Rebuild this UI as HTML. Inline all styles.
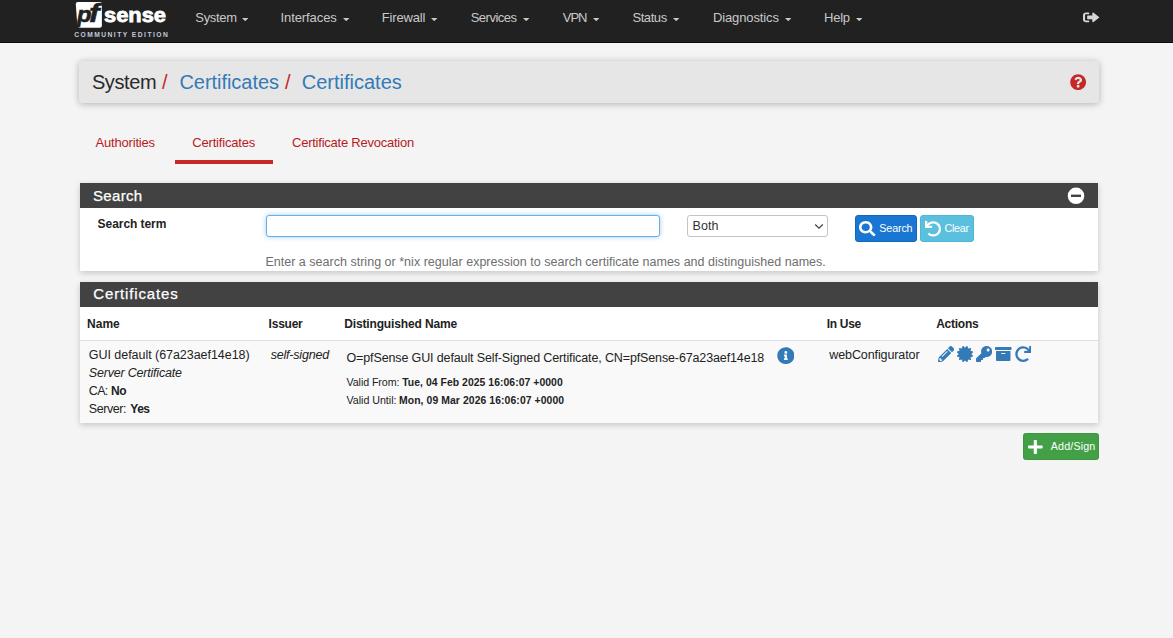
<!DOCTYPE html>
<html><head><meta charset="utf-8"><title>pfSense - Certificates</title>
<style>
*{box-sizing:border-box;margin:0;padding:0}
html,body{width:1173px;height:638px;overflow:hidden}
body{background:#f4f4f4;font-family:"Liberation Sans",sans-serif;color:#222;position:relative}
.a{position:absolute;display:block}
.t{position:absolute;white-space:nowrap;font-family:"Liberation Sans",sans-serif}
.panel{background:#fff;box-shadow:0 2px 6px rgba(0,0,0,.19)}
</style></head><body>
<div class="a" style="left:0;top:0;width:1173px;height:42.6px;background:#212121;border-bottom:1px solid #0c0c0c"></div>

<svg class="a" style="left:70px;top:0" width="105" height="42" viewBox="0 0 105 42">
<path d="M7.8 2 H30 Q31.9 2 31.9 3.9 V25.3 Q31.9 27.8 29.4 27.8 H10 Q7.6 27.8 7.3 25.4 L5.8 4.2 Q5.7 2 7.8 2 Z" fill="#fff"/>
<text x="7" y="22.4" font-family="Liberation Sans" font-weight="bold" font-style="italic" font-size="21.5" fill="#212121" stroke="#212121" stroke-width=".6" textLength="14.5" lengthAdjust="spacingAndGlyphs">p</text>
<text x="19" y="22.4" font-family="Liberation Sans" font-weight="bold" font-style="italic" font-size="25.5" fill="#212121" stroke="#212121" stroke-width=".5" textLength="10.5" lengthAdjust="spacingAndGlyphs">f</text>
<text x="34" y="22.4" font-family="Liberation Sans" font-weight="bold" font-size="20.3" fill="#fff" stroke="#fff" stroke-width=".8" textLength="62" lengthAdjust="spacingAndGlyphs">sense</text>
<text x="4.2" y="36.9" font-family="Liberation Sans" font-weight="bold" font-size="6.7" fill="#c3cbdc" textLength="93.6" lengthAdjust="spacing">COMMUNITY EDITION</text>
</svg>

<svg class="a" style="left:242px;top:18.1px" width="6.4" height="3.2" viewBox="0 0 6.4 3.2"><path d="M0 0H6.4L3.2 3.2Z" fill="#c9c9c9"/></svg>
<svg class="a" style="left:343px;top:18.1px" width="6.4" height="3.2" viewBox="0 0 6.4 3.2"><path d="M0 0H6.4L3.2 3.2Z" fill="#c9c9c9"/></svg>
<svg class="a" style="left:431px;top:18.1px" width="6.4" height="3.2" viewBox="0 0 6.4 3.2"><path d="M0 0H6.4L3.2 3.2Z" fill="#c9c9c9"/></svg>
<svg class="a" style="left:522.7px;top:18.1px" width="6.4" height="3.2" viewBox="0 0 6.4 3.2"><path d="M0 0H6.4L3.2 3.2Z" fill="#c9c9c9"/></svg>
<svg class="a" style="left:592.7px;top:18.1px" width="6.4" height="3.2" viewBox="0 0 6.4 3.2"><path d="M0 0H6.4L3.2 3.2Z" fill="#c9c9c9"/></svg>
<svg class="a" style="left:673.2px;top:18.1px" width="6.4" height="3.2" viewBox="0 0 6.4 3.2"><path d="M0 0H6.4L3.2 3.2Z" fill="#c9c9c9"/></svg>
<svg class="a" style="left:784.7px;top:18.1px" width="6.4" height="3.2" viewBox="0 0 6.4 3.2"><path d="M0 0H6.4L3.2 3.2Z" fill="#c9c9c9"/></svg>
<svg class="a" style="left:855.5px;top:18.1px" width="6.4" height="3.2" viewBox="0 0 6.4 3.2"><path d="M0 0H6.4L3.2 3.2Z" fill="#c9c9c9"/></svg>
<svg class="a" style="left:1083px;top:11.4px" width="16.5" height="12.8" viewBox="0 0 512 512" preserveAspectRatio="none"><path d="M497 273L329 441c-15 15-41 4.500-41-17v-96H152c-13.300 0-24-10.700-24-24v-96c0-13.300 10.700-24 24-24h136V88c0-21.400 25.900-32 41-17l168 168c9.300 9.400 9.300 24.600 0 34zM192 436v-40c0-6.600-5.400-12-12-12H96c-17.700 0-32-14.300-32-32V160c0-17.700 14.300-32 32-32h84c6.600 0 12-5.400 12-12V76c0-6.600-5.400-12-12-12H96c-53 0-96 43-96 96v192c0 53 43 96 96 96h84c6.600 0 12-5.400 12-12z" fill="#d6d6d6"/></svg>
<div class="a" style="left:78.7px;top:61px;width:1020.8px;height:42.2px;background:#e6e6e6;border-radius:3px;box-shadow:0 1px 7px rgba(0,0,0,.28)"></div>
<svg class="a" style="left:1069.8px;top:73.7px" width="16.3" height="16.3" viewBox="0 0 512 512" preserveAspectRatio="none"><path d="M504 256c0 136.997-111.043 248-248 248S8 392.997 8 256C8 119.083 119.043 8 256 8s248 111.083 248 248zM262.655 90c-54.497 0-89.255 22.957-116.549 63.758-3.536 5.286-2.353 12.415 2.715 16.258l34.699 26.310c5.205 3.947 12.621 3.008 16.665-2.122 17.864-22.658 30.113-35.797 57.303-35.797 20.429 0 45.698 13.148 45.698 32.958 0 14.976-12.363 22.667-32.534 33.976C247.128 238.528 216 254.941 216 296v4c0 6.627 5.373 12 12 12h56c6.627 0 12-5.373 12-12v-1.333c0-28.462 83.186-29.647 83.186-106.667 0-58.002-60.165-102-116.531-102zM256 338c-25.365 0-46 20.635-46 46 0 25.364 20.635 46 46 46s46-20.636 46-46c0-25.365-20.635-46-46-46z" fill="#c62828"/></svg>
<div class="a" style="left:175px;top:160px;width:98px;height:4px;background:#c62828"></div>
<div class="a panel" style="left:80px;top:183px;width:1018px;height:88px"></div>
<div class="a" style="left:80px;top:183px;width:1018px;height:25px;background:#424242"></div>
<svg class="a" style="left:1067px;top:187px" width="18" height="18" viewBox="0 0 18 18"><circle cx="9" cy="8.8" r="8.3" fill="#fff"/><rect x="4" y="7.6" width="10" height="2.4" fill="#424242"/></svg>
<div class="a" style="left:265.5px;top:215px;width:394.5px;height:22px;border:1px solid #66afe9;border-radius:3px;background:#fff;box-shadow:0 0 5px rgba(102,175,233,.6)"></div>
<div class="a" style="left:687.3px;top:215.3px;width:140.3px;height:21.6px;border:1px solid #c4c4c4;border-radius:3px;background:#fff"></div>
<svg class="a" style="left:814px;top:223px" width="10" height="7" viewBox="0 0 10 7"><path d="M1.2 1.5 L5 5.1 L8.8 1.5" fill="none" stroke="#444" stroke-width="1.3"/></svg>
<div class="a" style="left:855px;top:215px;width:62px;height:27px;background:#1976d2;border:1px solid #1666b8;border-radius:3px"></div>
<svg class="a" style="left:859.3px;top:221.1px" width="16.5" height="15.3" viewBox="0 0 512 512" preserveAspectRatio="none"><path d="M505 442.700L405.300 343c-4.500-4.500-10.600-7-17-7H372c27.600-35.300 44-79.700 44-128C416 93.100 322.900 0 208 0S0 93.100 0 208s93.100 208 208 208c48.300 0 92.700-16.400 128-44v16.300c0 6.400 2.500 12.500 7 17l99.700 99.700c9.400 9.400 24.600 9.400 33.900 0l28.300-28.300c9.400-9.400 9.400-24.600.1-34zM208 336c-70.700 0-128-57.200-128-128 0-70.700 57.200-128 128-128 70.700 0 128 57.200 128 128 0 70.700-57.200 128-128 128z" fill="#fff"/></svg>
<div class="a" style="left:920px;top:215px;width:54px;height:27px;background:#5bc0de;border:1px solid #50b6d6;border-radius:3px"></div>
<svg class="a" style="left:924.5px;top:221.2px" width="16.3" height="15.8" viewBox="0 0 512 512" preserveAspectRatio="none"><path d="M212.333 224.333H12c-6.627 0-12-5.373-12-12V12C0 5.373 5.373 0 12 0h48c6.627 0 12 5.373 12 12v78.112C117.773 39.279 184.260 7.470 258.175 8.007c136.906.994 246.448 111.623 246.157 248.532C504.041 393.258 393.120 504 256.333 504c-64.089 0-122.496-24.313-166.510-64.215-5.099-4.622-5.334-12.554-.467-17.420l33.967-33.967c4.474-4.474 11.662-4.717 16.401-.525C170.760 415.336 211.580 432 256.333 432c97.268 0 176-78.716 176-176 0-97.267-78.716-176-176-176-58.496 0-110.280 28.476-142.274 72.333h98.274c6.627 0 12 5.373 12 12v48c0 6.627-5.373 12-12 12z" fill="#fff"/></svg>
<div class="a panel" style="left:80px;top:282px;width:1018px;height:141px"></div>
<div class="a" style="left:80px;top:282px;width:1018px;height:25px;background:#424242"></div>
<div class="a" style="left:80px;top:340px;width:1018px;height:83px;background:#f9f9f9;border-top:1.5px solid #ddd"></div>
<svg class="a" style="left:776.8px;top:346.8px" width="17.7" height="17.3" viewBox="0 0 512 512" preserveAspectRatio="none"><path d="M256 8C119.043 8 8 119.083 8 256c0 136.997 111.043 248 248 248s248-111.003 248-248C504 119.083 392.957 8 256 8zm0 110c23.196 0 42 18.804 42 42s-18.804 42-42 42-42-18.804-42-42 18.804-42 42-42zm56 254c0 6.627-5.373 12-12 12h-88c-6.627 0-12-5.373-12-12v-24c0-6.627 5.373-12 12-12h12v-64h-12c-6.627 0-12-5.373-12-12v-24c0-6.627 5.373-12 12-12h64c6.627 0 12 5.373 12 12v100h12c6.627 0 12 5.373 12 12v24z" fill="#337ab7"/></svg>
<svg class="a" style="left:937.8px;top:345.8px" width="16.2" height="16.2" viewBox="0 0 512 512" preserveAspectRatio="none"><path d="M497.900 142.100l-46.100 46.100c-4.700 4.700-12.300 4.700-17 0l-111-111c-4.700-4.700-4.700-12.300 0-17l46.100-46.100c18.700-18.700 49.100-18.700 67.900 0l60.100 60.100c18.800 18.700 18.800 49.100 0 67.900zM284.200 99.800L21.600 362.400.4 483.900c-2.900 16.400 11.400 30.600 27.800 27.800l121.500-21.300 262.600-262.600c4.700-4.700 4.700-12.300 0-17l-111-111c-4.800-4.700-12.400-4.700-17.100 0zM124.100 339.900c-5.500-5.500-5.500-14.300 0-19.800l154-154c5.500-5.500 14.300-5.500 19.800 0s5.500 14.300 0 19.800l-154 154c-5.500 5.500-14.300 5.500-19.800 0zM88 424h48v36.300l-64.500 11.300-31.100-31.100L51.700 376H88v48z" fill="#337ab7"/></svg>
<svg class="a" style="left:957px;top:345.8px" width="16" height="16.1" viewBox="0 0 512 512" preserveAspectRatio="none"><path d="M458.622 255.920l45.985-45.005c13.708-12.977 7.316-36.039-10.664-40.339l-62.650-15.990 17.661-62.015c4.991-17.838-11.829-34.663-29.661-29.671l-61.994 17.667-15.984-62.671C337.085.197 313.765-6.276 300.990 7.228L256 53.570 211.011 7.229c-12.630-13.351-36.047-7.234-40.325 10.668l-15.984 62.671-61.995-17.667C74.870 57.907 58.056 74.738 63.046 92.572l17.661 62.015-62.650 15.990C.069 174.878-6.310 197.944 7.392 210.915l45.985 45.005-45.985 45.004c-13.708 12.977-7.316 36.039 10.664 40.339l62.650 15.990-17.661 62.015c-4.991 17.838 11.829 34.663 29.661 29.671l61.994-17.667 15.984 62.671c4.439 18.575 27.696 24.018 40.325 10.668L256 458.610l44.989 46.001c12.500 13.488 35.987 7.486 40.325-10.668l15.984-62.671 61.994 17.667c17.836 4.994 34.651-11.837 29.661-29.671l-17.661-62.015 62.650-15.990c17.987-4.302 24.366-27.367 10.664-40.339l-45.984-45.004z" fill="#337ab7"/></svg>
<svg class="a" style="left:976.1px;top:345.8px" width="16.2" height="16" viewBox="0 0 512 512" preserveAspectRatio="none"><path d="M512 176.001C512 273.203 433.202 352 336 352c-11.220 0-22.190-1.062-32.827-3.069l-24.012 27.014A23.999 23.999 0 0 1 261.223 384H224v40c0 13.255-10.745 24-24 24h-40v40c0 13.255-10.745 24-24 24H24c-13.255 0-24-10.745-24-24v-78.059c0-6.365 2.529-12.470 7.029-16.971l161.802-161.802C163.108 213.814 160 195.271 160 176 160 78.798 238.797.001 335.999 0 433.488-.001 512 78.511 512 176.001zM336 128c0 26.510 21.490 48 48 48s48-21.490 48-48-21.490-48-48-48-48 21.490-48 48z" fill="#337ab7"/></svg>
<svg class="a" style="left:995.1px;top:345.9px" width="16.5" height="16" viewBox="0 0 512 512" preserveAspectRatio="none"><path d="M32 448c0 17.700 14.300 32 32 32h384c17.700 0 32-14.300 32-32V160H32v288zm160-212c0-6.600 5.400-12 12-12h104c6.600 0 12 5.400 12 12v8c0 6.600-5.400 12-12 12H204c-6.600 0-12-5.400-12-12v-8zM480 32H32C14.300 32 0 46.300 0 64v48c0 8.800 7.200 16 16 16h480c8.800 0 16-7.200 16-16V64c0-17.700-14.300-32-32-32z" fill="#337ab7"/></svg>
<svg class="a" style="left:1014.9px;top:345.8px" width="16.4" height="16.2" viewBox="0 0 512 512" preserveAspectRatio="none"><path d="M500.330 0h-47.410a12 12 0 0 0-12 12.570l4 82.760A247.420 247.420 0 0 0 256 8C119.340 8 7.900 119.530 8 256.190 8.100 393.070 119.100 504 256 504a247.100 247.100 0 0 0 166.180-63.910 12 12 0 0 0 .48-17.430l-34-34a12 12 0 0 0-16.380-.55A176 176 0 1 1 402.100 157.800l-101.530-4.870a12 12 0 0 0-12.570 12v47.410a12 12 0 0 0 12 12h200.330a12 12 0 0 0 12-12V12a12 12 0 0 0-12-12z" fill="#337ab7"/></svg>
<div class="a" style="left:1023px;top:433px;width:76.2px;height:27px;background:#43a047;border:1px solid #3d9641;border-radius:2.5px"></div>
<svg class="a" style="left:1027.9px;top:439.1px" width="14.7" height="15.9" viewBox="0 0 448 512" preserveAspectRatio="none"><path d="M416 208H272V64c0-17.670-14.330-32-32-32h-32c-17.670 0-32 14.330-32 32v144H32c-17.670 0-32 14.330-32 32v32c0 17.670 14.330 32 32 32h144v144c0 17.670 14.330 32 32 32h32c17.670 0 32-14.330 32-32V304h144c17.670 0 32-14.330 32-32v-32c0-17.670-14.330-32-32-32z" fill="#fff"/></svg>
<div class="t" style="left:195.30px;top:10px;font-size:13px;line-height:15px;color:#c9c9c9;letter-spacing:-0.303px;">System</div>
<div class="t" style="left:280.50px;top:10px;font-size:13px;line-height:15px;color:#c9c9c9;letter-spacing:-0.087px;">Interfaces</div>
<div class="t" style="left:381.80px;top:10px;font-size:13px;line-height:15px;color:#c9c9c9;letter-spacing:-0.171px;">Firewall</div>
<div class="t" style="left:470.70px;top:10px;font-size:13px;line-height:15px;color:#c9c9c9;letter-spacing:-0.507px;">Services</div>
<div class="t" style="left:562.80px;top:10px;font-size:13px;line-height:15px;color:#c9c9c9;letter-spacing:-1.021px;">VPN</div>
<div class="t" style="left:632.40px;top:10px;font-size:13px;line-height:15px;color:#c9c9c9;letter-spacing:-0.411px;">Status</div>
<div class="t" style="left:713.00px;top:10px;font-size:13px;line-height:15px;color:#c9c9c9;letter-spacing:-0.130px;">Diagnostics</div>
<div class="t" style="left:824.00px;top:10px;font-size:13px;line-height:15px;color:#c9c9c9;letter-spacing:-0.235px;">Help</div>
<div class="t" style="left:91.90px;top:71px;font-size:20px;line-height:22px;color:#2a2a2a;letter-spacing:-0.384px;">System</div>
<div class="t" style="left:162.00px;top:71px;font-size:20px;line-height:22px;color:#c62828;letter-spacing:0.000px;">/</div>
<div class="t" style="left:179.40px;top:71px;font-size:20px;line-height:22px;color:#337ab7;letter-spacing:-0.039px;">Certificates</div>
<div class="t" style="left:285.00px;top:71px;font-size:20px;line-height:22px;color:#c62828;letter-spacing:0.000px;">/</div>
<div class="t" style="left:301.80px;top:71px;font-size:20px;line-height:22px;color:#337ab7;letter-spacing:-0.003px;">Certificates</div>
<div class="t" style="left:95.50px;top:135px;font-size:13px;line-height:15px;color:#b71c1c;letter-spacing:-0.182px;">Authorities</div>
<div class="t" style="left:192.30px;top:135px;font-size:13px;line-height:15px;color:#b71c1c;letter-spacing:-0.184px;">Certificates</div>
<div class="t" style="left:292.00px;top:135px;font-size:13px;line-height:15px;color:#b71c1c;letter-spacing:-0.235px;">Certificate Revocation</div>
<div class="t" style="left:93.00px;top:187px;font-size:15px;line-height:17px;color:#fff;letter-spacing:0.323px;-webkit-text-stroke:.25px #fff;">Search</div>
<div class="t" style="left:93.30px;top:285px;font-size:15px;line-height:17px;color:#fff;letter-spacing:0.862px;-webkit-text-stroke:.25px #fff;">Certificates</div>
<div class="t" style="left:97.60px;top:217px;font-size:12px;line-height:14px;color:#222;font-weight:bold;letter-spacing:-0.060px;">Search term</div>
<div class="t" style="left:692.50px;top:219px;font-size:12.5px;line-height:14px;color:#333;letter-spacing:0.079px;">Both</div>
<div class="t" style="left:879.30px;top:222px;font-size:10.8px;line-height:12px;color:#fff;letter-spacing:-0.181px;">Search</div>
<div class="t" style="left:944.50px;top:222px;font-size:10.8px;line-height:12px;color:#fff;letter-spacing:-0.301px;">Clear</div>
<div class="t" style="left:265.40px;top:255px;font-size:12.5px;line-height:14px;color:#6e6e6e;letter-spacing:0.018px;">Enter a search string or *nix regular expression to search certificate names and distinguished names.</div>
<div class="t" style="left:87.00px;top:317px;font-size:12px;line-height:14px;color:#222;font-weight:bold;letter-spacing:0.030px;">Name</div>
<div class="t" style="left:268.60px;top:317px;font-size:12px;line-height:14px;color:#222;font-weight:bold;letter-spacing:-0.237px;">Issuer</div>
<div class="t" style="left:344.20px;top:317px;font-size:12px;line-height:14px;color:#222;font-weight:bold;letter-spacing:-0.140px;">Distinguished Name</div>
<div class="t" style="left:826.80px;top:317px;font-size:12px;line-height:14px;color:#222;font-weight:bold;letter-spacing:-0.328px;">In Use</div>
<div class="t" style="left:936.20px;top:317px;font-size:12px;line-height:14px;color:#222;font-weight:bold;letter-spacing:-0.255px;">Actions</div>
<div class="t" style="left:88.80px;top:348px;font-size:12.5px;line-height:14px;color:#222;letter-spacing:-0.041px;">GUI default (67a23aef14e18)</div>
<div class="t" style="left:88.80px;top:366px;font-size:12.5px;line-height:14px;color:#222;font-style:italic;letter-spacing:-0.200px;">Server Certificate</div>
<div class="t" style="left:88.80px;top:384px;font-size:12.5px;line-height:14px;color:#222;letter-spacing:-0.682px;">CA:</div>
<div class="t" style="left:111.00px;top:384px;font-size:12px;line-height:14px;color:#222;font-weight:bold;letter-spacing:-0.366px;">No</div>
<div class="t" style="left:88.80px;top:402px;font-size:12.5px;line-height:14px;color:#222;letter-spacing:-0.436px;">Server:</div>
<div class="t" style="left:130.30px;top:402px;font-size:12px;line-height:14px;color:#222;font-weight:bold;letter-spacing:-0.508px;">Yes</div>
<div class="t" style="left:270.70px;top:348px;font-size:12.5px;line-height:14px;color:#222;font-style:italic;letter-spacing:-0.200px;">self-signed</div>
<div class="t" style="left:346.50px;top:351px;font-size:12.5px;line-height:14px;color:#222;letter-spacing:-0.127px;">O=pfSense GUI default Self-Signed Certificate, CN=pfSense-67a23aef14e18</div>
<div class="t" style="left:346.50px;top:376px;font-size:10.7px;line-height:12px;color:#222;letter-spacing:-0.087px;">Valid From:</div>
<div class="t" style="left:402.20px;top:377px;font-size:10.4px;line-height:11px;color:#222;font-weight:bold;letter-spacing:0.051px;">Tue, 04 Feb 2025 16:06:07 +0000</div>
<div class="t" style="left:346.50px;top:394px;font-size:10.7px;line-height:12px;color:#222;letter-spacing:-0.029px;">Valid Until:</div>
<div class="t" style="left:399.00px;top:395px;font-size:10.4px;line-height:11px;color:#222;font-weight:bold;letter-spacing:0.083px;">Mon, 09 Mar 2026 16:06:07 +0000</div>
<div class="t" style="left:829.30px;top:348px;font-size:12.5px;line-height:14px;color:#222;letter-spacing:-0.104px;">webConfigurator</div>
<div class="t" style="left:1050.80px;top:440px;font-size:10.7px;line-height:12px;color:#fff;letter-spacing:0.153px;">Add/Sign</div>
</body></html>
